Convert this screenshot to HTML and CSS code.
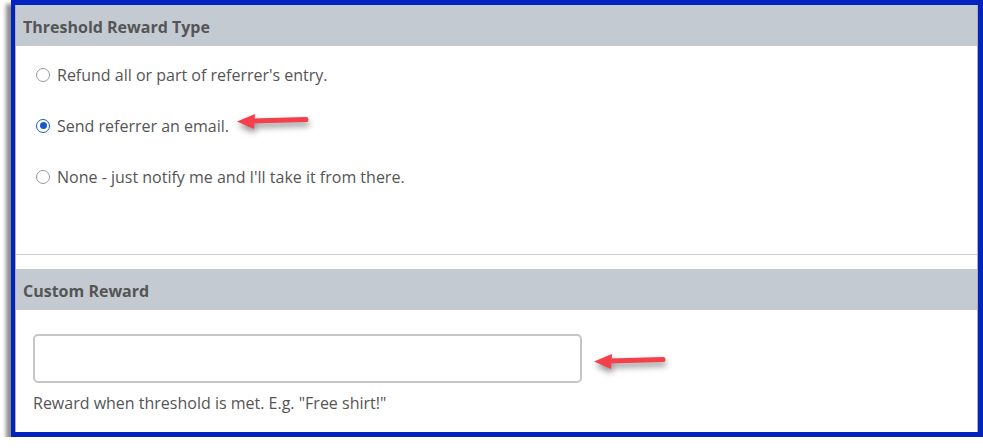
FILE: index.html
```html
<!DOCTYPE html>
<html>
<head lang="en">
    <meta charset="UTF-8">
    <title>Threshold Reward</title>
    <link rel="stylesheet" href="styles.css">
</head>
<body>
<div class="frame">
    <div class="panel">
        <div class="section">
            <div class="section-title">Threshold Reward Type</div>
            <ul class="options">
                <li><span class="radio"></span>Refund all or part of referrer's entry.</li>
                <li><span class="radio checked"></span>Send referrer an email.</li>
                <li><span class="radio"></span>None - just notify me and I'll take it from there.</li>
            </ul>
        </div>
        <div class="section last">
            <div class="section-title">Custom Reward</div>
            <div class="field">
                <div class="input"></div>
                <p class="help">Reward when threshold is met. E.g. "Free shirt!"</p>
            </div>
        </div>
    </div>
    <svg class="arrow arrow-email" width="80" height="24" viewBox="0 0 80 24">
        <path d="M72 10.5 L18 12" stroke="#f4404a" stroke-width="5" stroke-linecap="round" fill="none"/>
        <path d="M3 12.5 L21 5 L20 20 Z" fill="#f4404a"/>
    </svg>
    <svg class="arrow arrow-input" width="80" height="24" viewBox="0 0 80 24">
        <path d="M72 10.5 L18 12" stroke="#f4404a" stroke-width="5" stroke-linecap="round" fill="none"/>
        <path d="M3 12.5 L21 5 L20 20 Z" fill="#f4404a"/>
    </svg>
</div>
</body>
</html>
```

FILE: styles.css
```css
* {
    margin: 0;
    padding: 0;
    box-sizing: border-box;
}

ul, li {
    list-style: none;
}

body {
    background: #ffffff;
    font-family: "Open Sans", "Liberation Sans", sans-serif;
    color: #555555;
}

.frame {
    position: relative;
    margin-left: 11px;
    width: 972px;
    height: 437px;
    border: 5px solid #0223c0;
    border-left-width: 4px;
    box-shadow: -5px 4px 4px rgba(0, 0, 0, 0.45);
}

.panel {
    height: 100%;
    border-left: 1px solid #b0b0b0;
    border-right: 1px solid #b0b0b0;
    background: #ffffff;
}

.section-title {
    height: 41px;
    line-height: 37px;
    padding: 4px 0 0 7px;
    background: #c3cad1;
    font-weight: bold;
    font-size: 16px;
    color: #555555;
}

.options {
    padding: 3px 0 52px 20px;
    border-bottom: 1px solid #cccccc;
}

.options li {
    height: 51px;
    display: flex;
    align-items: center;
    font-size: 16px;
    color: #555555;
}

.radio {
    width: 14px;
    height: 14px;
    margin-right: 7px;
    border: 1px solid #9a9a9a;
    border-radius: 50%;
    background: #ffffff;
    position: relative;
}

.radio.checked {
    border-color: #1b58c6;
}

.radio.checked::after {
    content: "";
    position: absolute;
    left: 2.5px;
    top: 2.5px;
    width: 7px;
    height: 7px;
    border-radius: 50%;
    background: #1b58c6;
}

.section.last {
    margin-top: 14px;
}

.field {
    padding: 24px 0 0 17px;
}

.input {
    width: 549px;
    height: 49px;
    border: 2px solid #c6c6c6;
    border-radius: 5px;
}

.help {
    margin-top: 10px;
    font-size: 16px;
    line-height: 20px;
    color: #555555;
}

.arrow {
    position: absolute;
    filter: drop-shadow(1px 4px 3px rgba(0, 0, 0, 0.45));
}

.arrow-email {
    left: 219px;
    top: 104px;
}

.arrow-input {
    left: 576px;
    top: 344px;
}
```
